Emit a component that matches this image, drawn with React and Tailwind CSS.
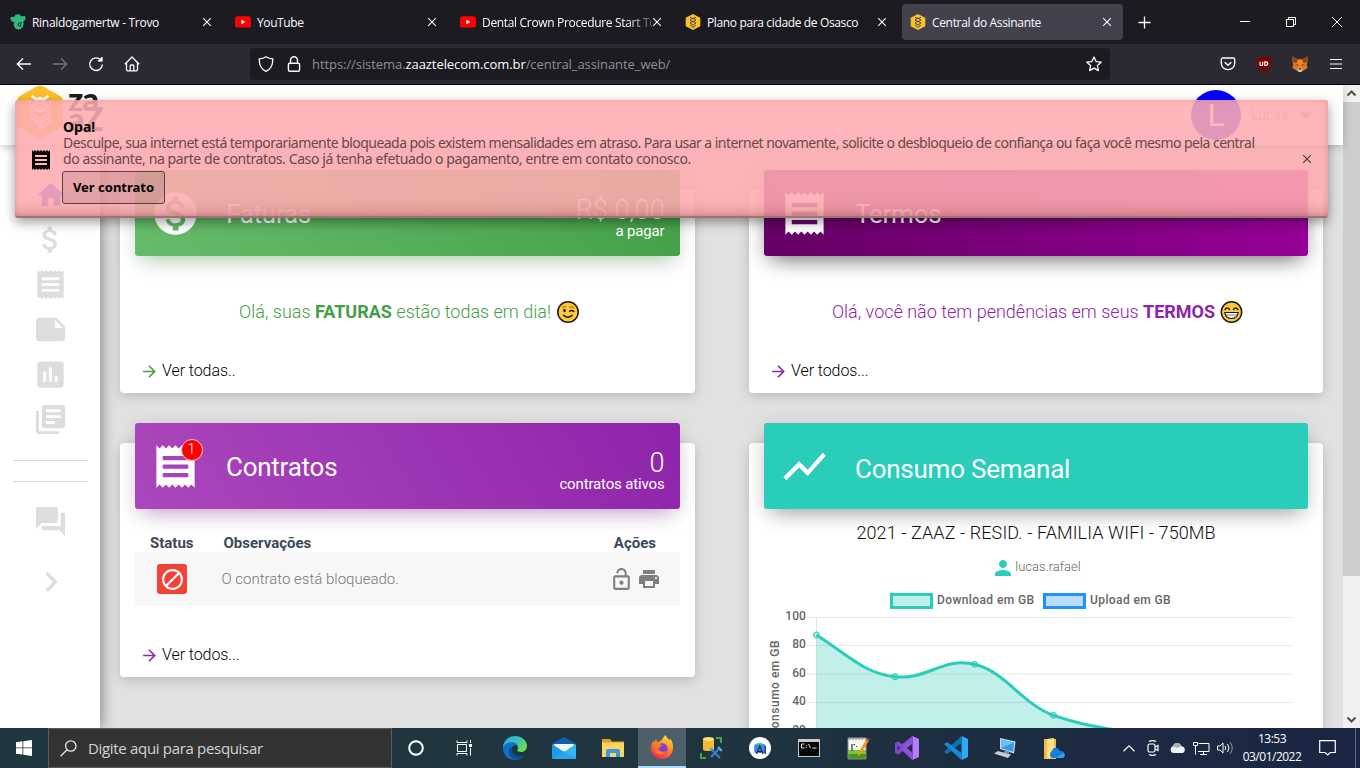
import React from "react";
import {
  MdReceipt, MdAttachMoney, MdNote, MdAssessment, MdLibraryBooks, MdForum, MdChevronRight,
  MdHome, MdMonetizationOn, MdArrowForward, MdBlock, MdLockOpen, MdPrint, MdShowChart,
  MdPerson, MdArrowDropDown,
} from "react-icons/md";

const UI = "font-['Open_Sans','Noto_Sans',sans-serif]";

function Trovo() {
  return (
    <svg width="16" height="16" viewBox="0 0 16 16">
      <path d="M5.500 .5h4.500l.6 1.800 4.400-.4c.8 2.200.5 4.400-.8 4.900l-1 .4c1.300 4-.9 8.300-4.700 8.300-3.200 0-4.900-2.400-4.700-5.400L4.400 8C1.600 8 .2 6 .3 3.500c1.500-.8 3-1 4.300-.8z" fill="#31b97c" />
      <path d="M12 9.200c-2-1.300-4.200.2-3.700 2 .4 1.400 2.600 1.300 2.700 0 0-.7-.8-.9-1.200-.5" fill="none" stroke="#1c1b22" strokeWidth="1" />
    </svg>
  );
}
function YouTube() {
  return (
    <svg width="16" height="16" viewBox="0 0 16 16">
      <rect x="0" y="2.300" width="16" height="11.200" rx="2.600" fill="#f00" />
      <path d="M6.400 5.600v4.700l4-2.350z" fill="#fff" />
    </svg>
  );
}
function Bee() {
  return (
    <svg width="16" height="16" viewBox="0 0 16 16">
      <path d="M8 0l7.300 3.800v8.400L8 16 .7 12.200V3.800z" fill="#fbc02d" />
      <path d="M5 3.200l3 1.600 3-1.600M8 4l3 2-3 2-3-2zM8 7l3 2-3 2-3-2zM5.200 11.200L8 13.400l2.800-2.200" fill="none" stroke="#4f4730" strokeWidth="1" />
    </svg>
  );
}
function Cross({ className = "" }) {
  return (
    <svg width="10" height="10" viewBox="0 0 10 10" className={"shrink-0 " + className}>
      <path d="M1.200 1.200l7.600 7.600M8.800 1.200L1.200 8.800" stroke="currentColor" strokeWidth="1.100" fill="none" />
    </svg>
  );
}

function Tab({ icon, title, active, track = "" }) {
  return (
    <div className={"flex h-9 items-center rounded-[4px] pl-2 pr-[11px] text-[#fbfbfe] " + (active ? "w-[221px] bg-[#42414d]" : "mr-1 w-[221px]")}>
      {icon}
      <span className={"ml-[6px] w-0 flex-1 overflow-hidden whitespace-nowrap pt-[2px] text-[12px] " + track}>{title}</span>
      <Cross />
    </div>
  );
}

function Chrome() {
  return (
    <header className={UI}>
      <div className="flex h-11 items-center bg-[#1c1b22] pl-[2px]">
        <Tab icon={<Trovo />} title="Rinaldogamertw - Trovo" track="tracking-[-0.3px]" />
        <Tab icon={<YouTube />} title="YouTube" track="tracking-[-0.4px]" />
        <Tab
          icon={<YouTube />}
          title="Dental Crown Procedure Start To Finish"
          track="tracking-[-0.33px] [mask-image:linear-gradient(to_right,black_145px,transparent_178px)]"
        />
        <Tab icon={<Bee />} title="Plano para cidade de Osasco" track="tracking-[-0.36px]" />
        <Tab icon={<Bee />} title="Central do Assinante" active track="tracking-[-0.34px]" />
        <svg className="ml-[15px]" width="13" height="13" viewBox="0 0 13 13"><path d="M6.500 .5v12M.5 6.500h12" stroke="#fbfbfe" strokeWidth="1.300" /></svg>
        <div className="ml-auto flex items-center gap-9 pr-[18px] text-white">
          <svg width="10" height="10" viewBox="0 0 10 10"><path d="M0 4.500h10" stroke="currentColor" /></svg>
          <svg width="10" height="10" viewBox="0 0 10 10"><path d="M.5 2.500h7v7h-7zM2.500 2.500v-2h7v7h-2" fill="none" stroke="currentColor" /></svg>
          <svg width="10" height="10" viewBox="0 0 10 10"><path d="M0 0l10 10M10 0L0 10" stroke="currentColor" strokeWidth="1" /></svg>
        </div>
      </div>
      <div className="flex h-[41px] items-center border-b border-black bg-[#2b2a33] pl-4 text-[#fbfbfe]">
        <svg width="16" height="16" viewBox="0 0 16 16" fill="none" stroke="currentColor" strokeWidth="1.300"><path d="M15 8H1.500M7 2.500L1.300 8 7 13.500" /></svg>
        <svg className="ml-5 text-[#76757c]" width="16" height="16" viewBox="0 0 16 16" fill="none" stroke="currentColor" strokeWidth="1.300"><path d="M1 8h13.500M9 2.500L14.700 8 9 13.500" /></svg>
        <svg className="ml-5" width="16" height="16" viewBox="0 0 16 16" fill="none" stroke="currentColor" strokeWidth="1.400"><path d="M14.300 8.500A6.300 6.300 0 1 1 12.700 4" /><path d="M10 5.200h4.200V1z" fill="currentColor" strokeWidth=".8" /></svg>
        <svg className="ml-5" width="16" height="16" viewBox="0 0 16 16" fill="none" stroke="currentColor" strokeWidth="1.300" strokeLinejoin="round"><path d="M.8 8.200L8 1l7.200 7.200M2.500 6.800v6.700c0 .8.400 1.300 1.200 1.300h8.600c.8 0 1.200-.5 1.200-1.300V6.800M6.200 14.800V10c0-.7.4-1 1-1h1.600c.6 0 1 .3 1 1v4.800" /></svg>
        <div className="ml-[110px] flex h-8 w-[860px] items-center rounded-[4px] bg-[#1c1b22] pl-2 pr-2">
          <svg width="16" height="16" viewBox="0 0 16 16" fill="none" stroke="currentColor" strokeWidth="1.300"><path d="M8 .7c2 1.400 4.300 2 6.700 2.200C15 9 12.700 13.200 8 15.400 3.300 13.200 1 9 1.300 2.900 3.700 2.700 6 2.100 8 .7z" /></svg>
          <svg className="ml-3" width="16" height="16" viewBox="0 0 16 16" fill="none" stroke="currentColor" strokeWidth="1.400"><rect x="2.400" y="7.200" width="11.200" height="8" rx="1.500" /><path d="M4.500 7V4.300a3.500 3.500 0 0 1 7 0V7" /></svg>
          <span className="ml-[10px] whitespace-nowrap pt-[2px] text-[13px] tracking-[-0.07px] text-[#8f8f94]">
            https://sistema.<span className="text-[#fbfbfe]">zaaztelecom.com.br</span>/central_assinante_web/
          </span>
          <svg className="ml-auto" width="16" height="16" viewBox="0 0 16 16" fill="none" stroke="currentColor" strokeWidth="1.300" strokeLinejoin="round"><path d="M8 1l2.100 4.600 5.100.6-3.800 3.400 1 5L8 12.100l-4.400 2.500 1-5L.8 6.200l5.100-.6z" /></svg>
        </div>
        <svg className="ml-[110px]" width="16" height="16" viewBox="0 0 16 16" fill="none" stroke="currentColor" strokeWidth="1.400"><path d="M2.800 2h10.400c1 0 1.500.5 1.500 1.500v3.700c0 8.600-13.400 8.600-13.400 0V3.500C1.300 2.500 1.800 2 2.800 2z" /><path d="M4.700 6.200L8 9.300l3.300-3.100" /></svg>
        <svg className="ml-5" width="16" height="16" viewBox="0 0 16 16"><path d="M8 .3c2.100 1.300 4.400 1.900 6.900 2v5c0 4.200-3 6.500-6.900 8.500-3.900-2-6.900-4.300-6.900-8.500v-5C3.600 2.200 5.900 1.600 8 .3z" fill="#800000" /><path d="M4 5.800v2.700c0 1.300 2.700 1.300 2.700 0V5.800M8.800 5.800v3.600h.8c2.800 0 2.800-3.600 0-3.600z" fill="none" stroke="#fff" strokeWidth="1.200" /></svg>
        <svg className="ml-5" width="16" height="16" viewBox="0 0 16 16"><path d="M.5.5L6 3.500h4L15.500.5l.3 5-1 3 .8 3.500-4 2.500H4.400L.4 12l.8-3.500-1-3z" fill="#e27625" /><path d="M.5.5L6 3.500 4.500 7 .2 6zM15.500.5L10 3.500 11.500 7l4.300-1z" fill="#864a25" /><path d="M6 3.500h4l1 6-1 3H6l-1-3z" fill="#f6851b" /><path d="M3.500 8.500l3 .3-.2 1.300zM12.500 8.500l-3 .3.2 1.300z" fill="#3a2b25" /><path d="M6 12h4l.5 2.300L9.500 16h-3l-1-1.700z" fill="#d7c1b3" /><path d="M6.800 12.200h2.400l.2 1.300H6.600z" fill="#222" /></svg>
        <svg className="ml-[22px]" width="12" height="12" viewBox="0 0 12 12"><path d="M0 1.500h12M0 6h12M0 10.500h12" stroke="currentColor" strokeWidth="1.200" /></svg>
      </div>
    </header>
  );
}

function Logo() {
  return (
    <div className="flex">
      <svg width="48" height="54" viewBox="0 0 48 54">
        <path d="M21 1.200Q24 -.4 27 1.200L44.500 11.300Q47 12.800 47 15.800V38Q47 41 44.500 42.500L27 52.500Q24 54 21 52.500L3.500 42.500Q1 41 1 38V15.800Q1 12.800 3.500 11.300z" fill="#fbc02d" />
        <path d="M15.500 11l5 3.500q3.500-3 7 0l5-3.500M24 15l9 6-9 6-9-6zM15 28l9-6 9 6-9 6zM14 32l10 6.500L34 32v4.500L24 44v-5" fill="none" stroke="#fff" strokeWidth="2.400" strokeLinejoin="round" />
      </svg>
      <div className="ml-1 pt-[3px] font-['Lato','DejaVu_Sans',sans-serif] text-[33px] font-black leading-[20px] tracking-[-1px] text-[#1d1d1b]">
        <div>za</div>
        <div>aZ</div>
      </div>
    </div>
  );
}

function Sidebar() {
  const items = [MdAttachMoney, MdReceipt, MdNote, MdAssessment, MdLibraryBooks];
  return (
    <aside className="relative flex w-[100px] shrink-0 flex-col items-center bg-white pl-px pt-[27px] text-[#dddddd] shadow-[3px_0_12px_rgba(0,0,0,0.35)]">
      <div className="flex h-[45px] items-center text-[#2a2aff]"><MdHome size={32} /></div>
      {items.map((Icon, i) => (
        <div key={i} className="flex h-[45px] items-center"><Icon size={35} /></div>
      ))}
      <div className="mt-[18px] h-px w-[75px] bg-[#d6d6d6]" />
      <div className="mt-5 h-px w-[75px] bg-[#d6d6d6]" />
      <MdForum size={35} className="mt-[22px] shrink-0" />
      <MdChevronRight size={40} className="mt-[23px] shrink-0" />
    </aside>
  );
}

function Card({ banner, height, children }) {
  return (
    <section className={"rounded-[4px] bg-white shadow-[0_3px_12px_rgba(0,0,0,0.18)] " + height}>
      {banner}
      {children}
    </section>
  );
}

function Banner({ tone, icon, title, value, label, titlePad = "pt-px" }) {
  return (
    <div className={"relative -top-5 mx-[15px] -mb-5 flex h-[86px] items-center rounded-[3px] text-white " + tone}>
      <div className="ml-[14.5px] flex w-[76.5px]">{icon}</div>
      <h2 className={"text-[26px] leading-8 tracking-[-0.25px] " + titlePad}>{title}</h2>
      {label && (
        <div className="ml-auto pr-[15.500px] pt-[9px] text-right">
          <div className="text-[27px] font-light leading-[28px]">{value}</div>
          <div className="text-[15px] leading-[15px]"><span className="font-normal tracking-[-0.15px]">{label}</span></div>
        </div>
      )}
    </div>
  );
}

function More({ color, text }) {
  return (
    <div className="flex items-center text-[16px] font-light text-black">
      <MdArrowForward size={19} className={color} />
      <span className="ml-[3px] tracking-[-0.08px]">{text}</span>
    </div>
  );
}

function Wink() {
  return (
    <svg width="22" height="22" viewBox="0 0 22 22">
      <circle cx="11" cy="11" r="10.200" fill="#ffc83d" stroke="#1a1a1a" strokeWidth="1.500" />
      <path d="M5.300 6.800q2-2 4-1M12.500 6.500q2.500-1.600 4.700.6" fill="none" stroke="#d67d00" strokeWidth="1.500" />
      <ellipse cx="7.500" cy="9.500" rx="1.300" ry="1.700" fill="#1a1a1a" />
      <path d="M12.700 10.200q2-1.600 4 .2M6.500 14.200q4.500 4 8.600 0" fill="none" stroke="#1a1a1a" strokeWidth="1.500" strokeLinecap="round" />
    </svg>
  );
}
function Grin() {
  return (
    <svg width="23" height="22" viewBox="0 0 22 22">
      <circle cx="11" cy="11" r="10.200" fill="#ffc83d" stroke="#1a1a1a" strokeWidth="1.500" />
      <path d="M4.500 8.500q2.300-3 4.600 0M12.900 8.500q2.300-3 4.600 0" fill="none" stroke="#1a1a1a" strokeWidth="1.400" strokeLinecap="round" />
      <path d="M4.300 11.500h13.400q-.6 6-6.700 6t-6.700-6z" fill="#fff" stroke="#1a1a1a" strokeWidth="1.200" />
      <path d="M4.700 14h12.600" stroke="#1a1a1a" strokeWidth=".6" />
    </svg>
  );
}

function Chart() {
  const ticks = [[100, 617.5], [80, 645.5], [60, 674], [40, 702.5], [20, 731]];
  const line = "M816.500 635C848 655 864 673.500 895 676.700C927 680.500 943 656.500 974.500 664.300C1006 672 1022 704 1053.500 715.300C1085 726 1100 727 1132 733";
  return (
    <svg width="544" height="118" viewBox="764 610 544 118" className="block font-['Roboto',sans-serif] text-[12px] font-medium">
      {ticks.map(([v, y]) => (
        <g key={v}>
          <path d={`M807 ${y}H1291.500`} stroke="#e6e6e6" strokeWidth="1" />
          <text x="806" y={y + 2.5} textAnchor="end" fill="#666" letterSpacing=".1">{v}</text>
        </g>
      ))}
      <path d="M816.500 617V728" stroke="#e2e2e2" />
      <path d={line + "V760H816.500z"} fill="#2accba" fillOpacity=".29" />
      <path d={line} fill="none" stroke="#2accba" strokeWidth="3" />
      {[[816.5, 635], [895, 676.7], [974.5, 664.3], [1053.5, 715.3]].map(([x, y]) => (
        <circle key={x} cx={x} cy={y} r="3" fill="#2accba" fillOpacity=".35" stroke="#2accba" />
      ))}
      <text transform="translate(778.500 640) rotate(-90)" textAnchor="end" fill="#666" letterSpacing=".5">Consumo em GB</text>
    </svg>
  );
}

function Toast() {
  return (
    <div className="absolute left-[15px] top-[15px] flex h-[118px] w-[1313px] items-center rounded-[3px] border-b-2 border-[#9b7476] bg-[rgba(255,172,177,0.88)] pr-4 font-['Noto_Sans',sans-serif] shadow-[0_4px_12px_rgba(0,0,0,0.4),inset_0_-12px_16px_-10px_rgba(120,50,50,0.35),inset_0_0_5px_rgba(150,60,60,0.2)]">
      <MdReceipt size={24} className="ml-[14px] mt-[3px] shrink-0 text-black" />
      <div className="ml-[10px] pt-[6px] text-[14px] leading-4 text-[#68484a]">
        <div className="text-[14px] font-bold text-black">Opa!</div>
        <div className="whitespace-nowrap tracking-[-0.54px]">Desculpe, sua internet está temporariamente bloqueada pois existem mensalidades em atraso. Para usar a internet novamente, solicite o desbloqueio de confiança ou faça você mesmo pela central</div>
        <div className="whitespace-nowrap tracking-[-0.39px]">do assinante, na parte de contratos. Caso já tenha efetuado o pagamento, entre em contato conosco.</div>
        <button className="-ml-px mt-1 h-[33px] w-[103px] rounded-[3px] border border-[#5c4042] bg-black/10 text-[13px] font-bold text-black">Ver contrato</button>
      </div>
      <Cross className="ml-auto mt-[2px] text-[#4e3436]" />
    </div>
  );
}

function Page() {
  return (
    <div className="relative flex h-[643px] overflow-hidden bg-[#e1e1e1] font-['Roboto',sans-serif]">
      <div className="flex w-[1343px] flex-col">
        <div className="relative z-10 flex h-[60px] shrink-0 items-start bg-white pl-4 shadow-[0_2px_8px_rgba(0,0,0,0.2)]">
          <Logo />
          <div className="ml-auto mr-5 flex items-center pt-[5px]">
            <div className="flex h-[50px] w-[50px] items-center justify-center rounded-full bg-[#0000ff] text-[32px] text-white">L</div>
            <span className="ml-[10px] w-9 text-[14px] text-[#aaa]">Lucas</span>
            <MdArrowDropDown size={34} className="ml-[2px] text-[#999]" />
          </div>
        </div>
        <div className="flex flex-1">
          <Sidebar />
          <main className="grid h-[583px] flex-1 grid-cols-[575px_574px] content-start items-start gap-x-[54px] gap-y-[50px] pl-5 pt-[45px]">
            <Card
              height="h-[203px]"
              banner={<Banner tone="bg-[linear-gradient(60deg,#66bb6a,#43a047)] shadow-[0_12px_20px_-10px_rgba(76,175,80,0.4),0_4px_20px_rgba(0,0,0,0.12)]" icon={<MdMonetizationOn size={51} />} title="Faturas" value="R$ 0,00" label="a pagar" />}
            >
              <div className="mt-[44px] flex items-center justify-center pl-[3px] text-[18px] font-light leading-6 text-[#43a047]">
                <span>Olá, suas <b className="font-bold">FATURAS</b> estão todas em dia!</span>
                <span className="ml-[6px]"><Wink /></span>
              </div>
              <div className="ml-5 mt-[35px]"><More color="text-[#43a047]" text="Ver todas.." /></div>
            </Card>
            <Card
              height="h-[203px]"
              banner={<Banner tone="bg-[linear-gradient(60deg,#640064,#990099)] shadow-[0_12px_20px_-10px_rgba(0,0,0,0.45),0_4px_20px_rgba(0,0,0,0.22)]" icon={<MdReceipt size={51} />} title="Termos" />}
            >
              <div className="mt-[44px] flex items-center justify-center pl-[3px] text-[18px] font-light leading-6 text-[#8e24aa]">
                <span>Olá, você não tem pendências em seus <b className="font-bold">TERMOS</b></span>
                <span className="ml-[5px]"><Grin /></span>
              </div>
              <div className="ml-5 mt-[35px]"><More color="text-[#8e24aa]" text="Ver todos..." /></div>
            </Card>
            <Card
              height="h-[234px]"
              banner={
                <Banner
                  tone="bg-[linear-gradient(60deg,#ab47bc,#8e24aa)] shadow-[0_12px_20px_-10px_rgba(156,39,176,0.4),0_4px_20px_rgba(0,0,0,0.12)]"
                  icon={
                    <span className="relative">
                      <MdReceipt size={51} />
                      <span className="absolute left-[31px] top-[-2px] flex h-[22px] w-[22px] items-center justify-center rounded-full border border-[#f5c4c4] bg-[#ff0000] text-[14px] font-light">1</span>
                    </span>
                  }
                  title="Contratos"
                  value="0"
                  label="contratos ativos"
                />
              }
            >
              <div className="mx-[15px] mt-[25px]">
                <div className="flex h-[18px] items-center pl-[15px] text-[15px] font-bold text-[#3c4858]">
                  <span className="w-[73.5px]">Status</span>
                  <span>Observações</span>
                  <span className="ml-auto pr-6">Ações</span>
                </div>
                <div className="flex h-[54px] items-center bg-[#f7f7f7] pl-[22px] pr-[19px] text-[#888]">
                  <span className="flex h-[30px] w-[30px] items-center justify-center rounded-[3px] bg-[#f44336] text-white"><MdBlock size={25} /></span>
                  <span className="ml-[34.500px] text-[15px] font-light text-[#777]">O contrato está bloqueado.</span>
                  <MdLockOpen size={25} className="ml-auto text-[#808080]" />
                  <MdPrint size={24} className="ml-[3px] text-[#808080]" />
                </div>
              </div>
              <div className="ml-5 mt-[37px]"><More color="text-[#8e24aa]" text="Ver todos..." /></div>
            </Card>
            <Card
              height="h-[320px]"
              banner={<Banner tone="bg-[#2accba] shadow-[0_12px_20px_-10px_rgba(0,0,0,0.3),0_4px_20px_rgba(0,0,0,0.15)]" icon={<MdShowChart size={51} />} title="Consumo Semanal" titlePad="pt-[5px]" />}
            >
              <div className="mt-3 text-center text-[18px] font-light leading-6 tracking-[0.1px] text-[#111]">2021 - ZAAZ - RESID. - FAMILIA WIFI - 750MB</div>
              <div className="mt-[11px] flex h-6 items-center justify-center text-[13px] font-light text-[#666]">
                <MdPerson size={24} className="text-[#2accba]" />
                <span className="pb-[2px]">lucas.rafael</span>
              </div>
              <div className="mt-[13px] flex h-4 items-center pl-[141px] text-[12px] font-medium leading-[14px] tracking-[0.4px] text-[#666]">
                <span className="h-4 w-[43px] border-[3px] border-[#2accba] bg-[#c0efea]" />
                <span className="ml-1 w-[98px] whitespace-nowrap pb-[2px]">Download em GB</span>
                <span className="ml-2 h-4 w-[43px] border-[3px] border-[#1e90ff] bg-[#b9dcff]" />
                <span className="ml-1 whitespace-nowrap pb-[2px]">Upload em GB</span>
              </div>
              <div className="ml-[15px] mt-px"><Chart /></div>
            </Card>
          </main>
        </div>
      </div>
      <div className="flex w-[17px] flex-col bg-[#f0f0f0] text-[#505050]">
        <svg width="17" height="17" viewBox="0 0 17 17"><path d="M4.500 10.500l4-4 4 4" fill="none" stroke="currentColor" strokeWidth="2" /></svg>
        <div className="h-[474px] bg-[#cdcdcd]" />
        <svg className="mt-auto" width="17" height="17" viewBox="0 0 17 17"><path d="M4.500 6.500l4 4 4-4" fill="none" stroke="currentColor" strokeWidth="2" /></svg>
      </div>
      <div className="absolute inset-0 z-20"><Toast /></div>
    </div>
  );
}

function App32({ children, active }) {
  return (
    <div className={"flex h-10 items-center justify-center " + (active ? "ml-px w-12 border-b-2 border-[#a9dcff] bg-[#4d5f69]" : "w-[49px]")}>
      <svg width="24" height="24" viewBox="0 0 24 24">{children}</svg>
    </div>
  );
}

function Taskbar() {
  return (
    <footer className={"flex h-10 items-center bg-[linear-gradient(90deg,#20373f,#20353f_50%,#1c2c42_75%,#1a2643)] text-white " + UI}>
      <div className="flex w-12 justify-center">
        <svg width="16" height="16" viewBox="0 0 16 16" fill="#fff"><path d="M0 2.200l6.500-.9v6.200H0zM7.300 1.200L16 0v7.500H7.300zM0 8.300h6.500v6.200L0 13.700zM7.300 8.300H16V16l-8.700-1.300z" /></svg>
      </div>
      <div className="flex h-10 w-[344px] items-center border border-[#5c5c5c] bg-[#333333] pl-[11px]">
        <svg width="17" height="17" viewBox="0 0 17 17" fill="none" stroke="#e6e6e6" strokeWidth="1.300"><circle cx="10.800" cy="6" r="5.200" /><path d="M7 9.800L.6 16.300" /></svg>
        <span className="ml-[11px] whitespace-nowrap text-[15px] tracking-[-0.32px] text-[#d4d4d4]">Digite aqui para pesquisar</span>
      </div>
      <div className="flex w-12 justify-center"><svg width="16" height="16" viewBox="0 0 16 16"><circle cx="8" cy="8" r="6.800" fill="none" stroke="#fff" strokeWidth="2" /></svg></div>
      <div className="flex w-[48px] justify-center">
        <svg width="17" height="16" viewBox="0 0 17 16" fill="none" stroke="#fff"><path d="M1 .5v2h10v-2M1 15.500v-2h10v2M1.500 4.500h9v7h-9zM14.500 0v3M14.500 8v7.500" /><path d="M13 4h3v3h-3z" fill="#fff" stroke="none" /></svg>
      </div>
      <div className="ml-[2px] flex">
        <App32>
          <defs><linearGradient id="edge" x1="0" y1="0" x2="1" y2=".5"><stop stopColor="#2aa7e8" /><stop offset=".6" stopColor="#35c1c1" /><stop offset="1" stopColor="#6bdc4a" /></linearGradient></defs>
          <path d="M0 12C0 5 5.500 0 12 0s12 4.500 12 10c0 3.500-2.500 6-6 6-2.500 0-4-1-3.700-2 2-3-.3-6.500-4.300-6.500C5 7.500 1 9 0 12z" fill="url(#edge)" />
          <path d="M0 12c1-4 5-5.800 9-5.800 3 0 5 1.400 5.500 3.300C11 8 8.500 11 8.500 14c0 5 6 8 12.500 5.500C19 22.500 15.500 24 12 24 5 24 0 18.500 0 12z" fill="#1272c9" />
          <path d="M8.500 14c0 5 6 8 13 4.500-3 5.500-9 6-12 4C5 20 4.500 14 8.500 10.500z" fill="#0c4f95" />
        </App32>
        <App32>
          <path d="M0 8L12 1l12 7v3H0z" fill="#0b62b0" /><path d="M2 8h20v9H2z" fill="#f2f6fa" /><path d="M0 8l12 8L0 23z" fill="#1d9be6" /><path d="M24 8L12 16l12 7z" fill="#35b4f5" /><path d="M0 23l12-8 12 8z" fill="#28a8ee" />
        </App32>
        <App32>
          <path d="M1 3h8l2 2.500h12V21H1z" fill="#e0a21b" /><path d="M1 6.500h22V21H1z" fill="#fcd462" /><path d="M5 21v-6q0-2 2-2h10q2 0 2 2v6h-4v-4H9v4z" fill="#3a96dd" />
        </App32>
        <App32 active>
          <defs><linearGradient id="fx" x1=".8" y1="0" x2=".3" y2="1"><stop stopColor="#fff04a" /><stop offset=".45" stopColor="#ff8a1f" /><stop offset="1" stopColor="#f5206d" /></linearGradient></defs>
          <path d="M15.500 0c1 2.800 3.300 3.700 4.400 5.600.5-.2.300-1.600 0-2.400C25.500 9.500 24 24 12 24 5 24 1 18.500 1 13.500c0-3.500 1-6 2.500-8l.6 2.200L6 4.200l1.300 3C10 6.800 12 5 13 3c.7-1.300 1.500-2 2.500-3z" fill="url(#fx)" />
          <circle cx="12.300" cy="13.500" r="5.200" fill="#7a3fe0" /><path d="M4.500 9c3-1 5 .2 7.800 1.200-1 1.800-3.300 1.600-4 3.300 1 3.500 5 4 7.500 2.300-1 4-5.500 5-8.500 3S3.500 13 4.500 9z" fill="#ff7a18" />
        </App32>
        <App32>
          <path d="M4 3v10.500c0 2 11 2 11 0V3z" fill="#f5b82e" /><ellipse cx="9.500" cy="3" rx="5.500" ry="2" fill="#ffdf7a" /><path d="M17 2h5v5M2 17v5h5" fill="none" stroke="#3fa34a" strokeWidth="2" /><path d="M12 13l9 9M21 12l-9 9" stroke="#2b87d1" strokeWidth="2" /><path d="M19 11l4 4M10.500 13.500l3-2" stroke="#5cb0ee" strokeWidth="2" />
        </App32>
        <App32>
          <circle cx="12" cy="12" r="11" fill="#fff" /><path d="M6 15.500V11a6 6 0 0 1 11.500 0v4.500z" fill="#3ddc84" /><path d="M6.500 8.500h10.500V17H6.500z" fill="#4285f4" /><path d="M8.500 18l3.300-8 3.300 8M10 15.500h3.600M17.300 10v8" fill="none" stroke="#073042" strokeWidth="1.200" />
        </App32>
        <App32>
          <path d="M1 3h22v18H1z" fill="#c9c9c9" /><path d="M2 6h20v14H2z" fill="#080808" /><path d="M7.500 8H4.500v4h3M9.500 9v.8M9.500 11.200v.8M11.500 8l2 4M15.500 12h4" fill="none" stroke="#ddd" />
        </App32>
        <App32>
          <path d="M2 2h18v21H2z" fill="#f4f7ef" /><path d="M2 14h18v9H2z" fill="#7cc832" /><path d="M2 18h18v5H2z" fill="#44961c" /><path d="M2 2h18v21H2z" fill="none" stroke="#8b8b8b" /><path d="M4 1v3M7 1v3M10 1v3M13 1v3M16 1v3" stroke="#777" /><path d="M6 8v7M7.500 8.500h1.500M10.500 10v1" stroke="#333" strokeWidth="1.200" /><path d="M21 2l2.500 1.500L15 18l-3 2 .5-3.500z" fill="#f09a28" /><path d="M21 2l2.500 1.500-1 2L20 4z" fill="#c93838" />
        </App32>
        <App32>
          <path d="M17.500 0L24 3v18l-6.500 3z" fill="#b57cf5" /><path d="M17.500 0v7L3.500 18.500 0 17V7l3.500-1.500L17.500 17v7L3.200 11z" fill="#8347cf" /><path d="M17.500 0v7.500L12 12l5.500 5v7L7 13.500v-3z" fill="#8f50dc" /><path d="M2.500 9.500v5L5 12z" fill="#1e3042" />
        </App32>
        <App32>
          <path d="M17.500 0L24 3v18l-6.500 3z" fill="#2aaaf2" /><path d="M17.500 0v7L3 18l-3-2 17.500-16z" fill="#0b70b8" /><path d="M17.500 24v-7L3 6 0 8z" fill="#1789d6" />
        </App32>
        <App32>
          <path d="M7 2l15.500 3.500-1.500 12L7 13z" fill="#d3dde3" /><path d="M8.200 3.500l13 3-1 9.200-12-3.500z" fill="#2c9bea" /><path d="M8.200 3.500l13 3L8.200 12z" fill="#6bc2fa" /><path d="M5 15l13 3.500-3 3.500L1 17.500z" fill="#c7ced2" /><path d="M12 14l4 1v3l-5-1z" fill="#87949b" />
        </App32>
        <App32>
          <path d="M2 3h12v20H2z" fill="#f1bd48" /><path d="M5 3l7-1v19l-7 2z" fill="#ffe08a" /><path d="M10 22a4 4 0 0 1 0-7q1-4 5-3 2 .3 3 3 4-.5 4.500 3.500T18.500 22z" fill="#1480d8" /><path d="M13 22l9-5q2 3-1.500 5z" fill="#2fa4f1" />
        </App32>
      </div>
      <div className="ml-auto flex items-center">
        <svg width="12" height="7" viewBox="0 0 12 7"><path d="M.5 6.300L6 .9l5.500 5.400" fill="none" stroke="#fff" strokeWidth="1.200" /></svg>
        <svg className="ml-[11px]" width="14" height="16" viewBox="0 0 14 16" fill="none" stroke="#fff" strokeWidth="1.200"><rect x="2" y="4" width="7" height="8" rx="1.500" /><path d="M9 7l3-1.500v5L9 9M3 1.500Q6.500-.3 10 1.500M3 14.500Q6.500 16.300 10 14.500" /></svg>
        <svg className="ml-[9px]" width="16" height="12" viewBox="0 0 16 12"><path d="M4 11a3.500 3.500 0 0 1-.5-6.500Q5 .7 8.500 1q3 .3 4 3.200 3.500.6 3.300 4Q15.500 11 12.500 11z" fill="#f2f2f2" /><path d="M3.500 4.500Q5 .7 8.500 1q3 .3 4 3.200L8 6z" fill="#aab0b8" /></svg>
        <svg className="ml-2" width="17" height="15" viewBox="0 0 17 15" fill="none" stroke="#fff"><path d="M5.500 2.500h10.500v8H5M10.500 10.500v3M7 13.500h7M.5 1.500h4v3h-4zM2.500 4.500v9" /></svg>
        <svg className="ml-[7px]" width="17" height="14" viewBox="0 0 17 14" fill="none" stroke="#fff"><path d="M.5 5v4h2.500l3 3V2L3 5zM8 4.800q1.500 2.200 0 4.400M10.500 3q3 4 0 8" /><path d="M13 1q4.500 6 0 12" stroke="#8b95a5" /></svg>
        <div className="ml-1 w-[68px] text-center text-[12px] leading-[18px] tracking-[-0.5px]"><div>13:53</div><div>03/01/2022</div></div>
        <svg className="ml-[13px]" width="17" height="16" viewBox="0 0 17 16" fill="none" stroke="#fff" strokeWidth="1.200"><path d="M.7.7h15.600v11.800h-5l-2.600 2.500-2.600-2.500H.7z" /></svg>
        <div className="ml-[19px] mr-1 h-10 w-px bg-[#5f6c7e]" />
      </div>
    </footer>
  );
}

export default function App() {
  return (
    <div className="flex h-[768px] w-[1360px] flex-col overflow-hidden">
      <Chrome />
      <Page />
      <Taskbar />
    </div>
  );
}
